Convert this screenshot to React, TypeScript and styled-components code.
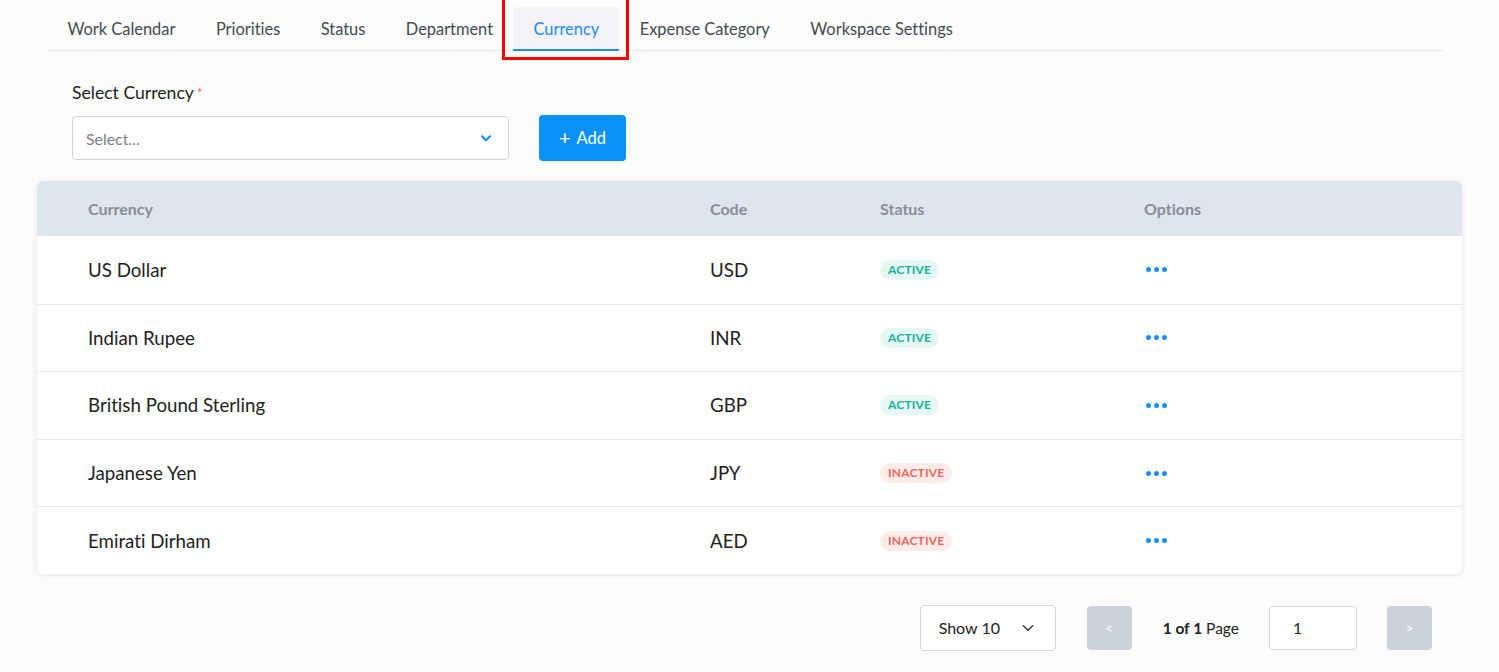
import React from "react";
import styled, { createGlobalStyle } from "styled-components";

const Global = createGlobalStyle`
  html, body { margin: 0; padding: 0; background: #fcfcfc; }
  body { font-family: Lato, "Noto Sans", sans-serif; color: #222; font-variant-ligatures: none; }
  * { box-sizing: border-box; }
`;

const Page = styled.div`
  width: 1499px;
  height: 672px;
  overflow: hidden;
  position: relative;
  padding: 7px 56px 0 37px;
`;

const TabBar = styled.div`
  display: flex;
  margin-left: 10px;
  border-bottom: 1px solid #e6e8eb;
  height: 44px;
`;

const Tab = styled.div<{ $active?: boolean }>`
  position: relative;
  padding: 1px 20px 0 20.5px;
  display: flex;
  align-items: center;
  font-size: 16.4px;
  color: ${(p) => (p.$active ? "#1a8cff" : "#444a52")};
  background: ${(p) => (p.$active ? "#f3f3f8" : "transparent")};
  border-radius: 4px 4px 0 0;
  border-bottom: 2px solid ${(p) => (p.$active ? "#1a8cff" : "transparent")};
  margin-bottom: -1px;
`;

const Highlight = styled.div`
  position: absolute;
  left: -11px;
  top: -10px;
  right: -10px;
  bottom: -11px;
  border: 3px solid #f00;
  pointer-events: none;
`;

const Form = styled.div`
  padding: 32px 0 0 35px;
`;

const Label = styled.div`
  font-size: 17.6px;
  color: #222;
  line-height: 20px;
  span { color: #f0665a; font-size: 13px; vertical-align: top; margin-left: 3px; }
`;

const FormRow = styled.div`
  display: flex;
  align-items: center;
  gap: 30px;
  margin-top: 12px;
`;

const SelectBox = styled.div`
  width: 437px;
  height: 44px;
  border: 1px solid #cfd3d8;
  border-radius: 4px;
  background: #fff;
  display: flex;
  align-items: center;
  justify-content: space-between;
  padding: 0 15px 0 13px;
  font-size: 15.9px;
  color: #7d8087;
`;

const AddButton = styled.button`
  height: 46px;
  width: 87px;
  border: none;
  border-radius: 4px;
  background: #0a91f7;
  color: #fff;
  font-family: Lato, sans-serif;
  font-size: 16.5px;
  display: flex;
  align-items: center;
  justify-content: center;
  gap: 6px;
`;

const Table = styled.div`
  margin-top: 20px;
  width: 1425px;
  background: #fff;
  border-radius: 6px;
  box-shadow: 0 1px 6px rgba(0, 0, 0, 0.09);
  overflow: hidden;
`;

const Row = styled.div<{ $head?: boolean }>`
  display: grid;
  grid-template-columns: 622px 170px 264px 1fr;
  align-items: center;
  padding-left: 51px;
  height: ${(p) => (p.$head ? "55px" : "67.6px")};
  background: ${(p) => (p.$head ? "#dfe5ec" : "#fff")};
  border-top: ${(p) => (p.$head ? "none" : "1px solid #e8e8e8")};
  font-size: ${(p) => (p.$head ? "16px" : "18.7px")};
  font-weight: ${(p) => (p.$head ? 700 : 400)};
  color: ${(p) => (p.$head ? "#878d98" : "#222")};
  &:nth-child(2) { border-top: none; }
`;

const Badge = styled.span<{ $active: boolean }>`
  display: inline-block;
  font-size: 12px;
  font-weight: 700;
  letter-spacing: 0.2px;
  padding: 3px 8px 3px;
  border-radius: 10px;
  line-height: 14px;
  color: ${(p) => (p.$active ? "#14b39a" : "#f0665a")};
  background: ${(p) => (p.$active ? "#e6f7f4" : "#fdecea")};
`;

const Cell = styled.div`
  display: flex;
  align-items: center;
`;

const Dots = styled.div`
  display: flex;
  gap: 3px;
  margin-left: 2px;
  i {
    width: 5px;
    height: 5px;
    border-radius: 50%;
    background: #1a8cff;
  }
`;

const Pager = styled.div`
  display: flex;
  align-items: center;
  justify-content: flex-end;
  margin-top: 31px;
  width: 1395px;
`;

const ShowSelect = styled.div`
  width: 136px;
  height: 46px;
  border: 1px solid #d3d6db;
  border-radius: 4px;
  background: #fff;
  display: flex;
  align-items: center;
  justify-content: space-between;
  padding: 0 20px 0 18px;
  font-size: 16px;
  color: #222;
`;

const PageBtn = styled.div`
  width: 45px;
  height: 44px;
  border-radius: 4px;
  background: #cbd2da;
  color: #fff;
  display: flex;
  align-items: center;
  justify-content: center;
  font-size: 13px;
`;

const PageInfo = styled.div`
  font-size: 15.5px;
  color: #222;
  margin: 0 30px 0 31px;
  b { font-weight: 700; }
`;

const PageInput = styled.div`
  width: 88px;
  height: 44px;
  border: 1px solid #d3d6db;
  border-radius: 4px;
  background: #fff;
  display: flex;
  align-items: center;
  padding-left: 23px;
  font-size: 15.5px;
  margin-right: 30px;
`;

const rows = [
  { name: "US Dollar", code: "USD", active: true },
  { name: "Indian Rupee", code: "INR", active: true },
  { name: "British Pound Sterling", code: "GBP", active: true },
  { name: "Japanese Yen", code: "JPY", active: false },
  { name: "Emirati Dirham", code: "AED", active: false },
];

const tabs = ["Work Calendar", "Priorities", "Status", "Department", "Currency", "Expense Category", "Workspace Settings"];

export default function App() {
  return (
    <>
      <Global />
      <Page>
        <TabBar>
          {tabs.map((t) => (
            <Tab key={t} $active={t === "Currency"}>
              {t}
              {t === "Currency" && <Highlight />}
            </Tab>
          ))}
        </TabBar>
        <Form>
          <Label>
            Select Currency<span>*</span>
          </Label>
          <FormRow>
            <SelectBox>
              Select...
              <svg width="14" height="14" viewBox="0 0 24 24" fill="none" stroke="#1a8cff" strokeWidth="3.5" strokeLinecap="round" strokeLinejoin="round">
                <polyline points="5 9 12 16 19 9" />
              </svg>
            </SelectBox>
            <AddButton>
              <span style={{ fontSize: 20, lineHeight: 1, marginTop: -2 }}>+</span>Add
            </AddButton>
          </FormRow>
        </Form>
        <Table>
          <Row $head>
            <div>Currency</div>
            <div>Code</div>
            <div>Status</div>
            <div>Options</div>
          </Row>
          {rows.map((r) => (
            <Row key={r.code}>
              <div>{r.name}</div>
              <div>{r.code}</div>
              <Cell>
                <Badge $active={r.active}>{r.active ? "ACTIVE" : "INACTIVE"}</Badge>
              </Cell>
              <Cell>
                <Dots>
                  <i />
                  <i />
                  <i />
                </Dots>
              </Cell>
            </Row>
          ))}
        </Table>
        <Pager>
          <ShowSelect>
            Show 10
            <svg width="14" height="14" viewBox="0 0 24 24" fill="none" stroke="#333" strokeWidth="2.5" strokeLinecap="round" strokeLinejoin="round">
              <polyline points="4 8 12 16 20 8" />
            </svg>
          </ShowSelect>
          <PageBtn style={{ marginLeft: 31 }}>&lt;</PageBtn>
          <PageInfo>
            <b>1 of 1</b> Page
          </PageInfo>
          <PageInput>1</PageInput>
          <PageBtn>&gt;</PageBtn>
        </Pager>
      </Page>
    </>
  );
}
